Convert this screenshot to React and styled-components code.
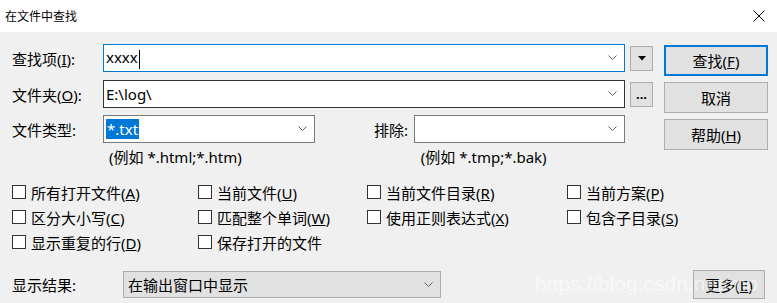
import styled, { createGlobalStyle } from "styled-components";

const GlobalStyle = createGlobalStyle`
  html, body {
    margin: 0;
    padding: 0;
    background: #f0f0f0;
  }
  body {
    font-family: "Noto Sans", "Noto Sans CJK SC", sans-serif;
    color: #000;
  }
`;

const Dialog = styled.div`
  position: relative;
  width: 777px;
  height: 303px;
  background: #f0f0f0;
  overflow: hidden;
`;

const TitleBar = styled.div`
  height: 32px;
  background: #fff;
  display: flex;
  align-items: center;
  justify-content: space-between;
  padding: 0 12px 0 5px;
  box-sizing: border-box;
  font-size: 12px;
`;

const Body = styled.div`
  padding: 12px 9px 0 12px;
  font-size: 15px;
`;

const Top = styled.div`
  display: flex;
  justify-content: space-between;
`;

const Form = styled.div`
  width: 641px;
  display: flex;
  flex-direction: column;
`;

const Row = styled.div`
  display: flex;
  align-items: center;
  height: 28px;
  margin-bottom: ${(p) => p.$mb ?? 8}px;
`;

const Label = styled.div`
  width: ${(p) => p.$w ?? 91}px;
  margin-left: ${(p) => p.$ml ?? 0}px;
  flex: none;
  white-space: nowrap;
`;

const Field = styled.div`
  width: ${(p) => p.$w}px;
  height: 28px;
  box-sizing: border-box;
  border: 1px solid ${(p) => p.$border};
  background: ${(p) => p.$bg ?? "#fff"};
  display: flex;
  align-items: center;
  padding: 0 7px 0 2px;
  flex: none;
`;

const FieldText = styled.span`
  flex: 1;
  white-space: nowrap;
  line-height: 20px;
`;

const Selected = styled.span`
  background: #0078d7;
  color: #fff;
  padding: 0 1px;
`;

const Cursor = styled.span`
  display: inline-block;
  width: 1px;
  height: 19px;
  background: #000;
  vertical-align: middle;
  margin-left: 1px;
`;

const SmallButton = styled.div`
  width: 23px;
  height: 25px;
  box-sizing: border-box;
  margin-left: 5px;
  border: 1px solid #adadad;
  background: #e1e1e1;
  display: flex;
  align-items: center;
  justify-content: center;
  flex: none;
  font-weight: bold;
  font-size: 13px;
  line-height: 1;
`;

const Hint = styled.div`
  display: flex;
  height: 20px;
`;

const HintText = styled.span`
  margin-left: ${(p) => p.$ml}px;
  white-space: nowrap;
`;

const Buttons = styled.div`
  width: 104px;
  display: flex;
  flex-direction: column;
  gap: 6px;
  padding-top: 1px;
`;

const Button = styled.div`
  height: ${(p) => p.$h ?? 31}px;
  box-sizing: border-box;
  border: ${(p) => (p.$primary ? "2px solid #0078d7" : "1px solid #adadad")};
  background: #e1e1e1;
  display: flex;
  align-items: center;
  justify-content: center;
  width: ${(p) => p.$w ?? 104}px;
  flex: none;
`;

const Checks = styled.div`
  display: grid;
  grid-template-columns: 186px 169px 200px auto;
  row-gap: 5px;
  margin-top: 16px;
`;

const Check = styled.label`
  display: flex;
  align-items: center;
  height: 20px;
  white-space: nowrap;
`;

const Box = styled.span`
  width: 14px;
  height: 14px;
  box-sizing: border-box;
  border: 1px solid #333;
  background: #fff;
  margin-right: 5px;
  flex: none;
`;

const Bottom = styled.div`
  display: flex;
  align-items: center;
  margin-top: 18px;
`;

const ResultCombo = styled(Field)`
  height: 27px;
  padding-left: 4px;
`;

const Watermark = styled.div`
  position: absolute;
  left: 535px;
  top: 272px;
  font-family: "Liberation Sans", sans-serif;
  font-size: 21px;
  color: rgba(255, 255, 255, 0.55);
  pointer-events: none;
  white-space: nowrap;
`;

function Chevron() {
  return (
    <svg width="9" height="6" viewBox="0 0 9 6">
      <polyline points="0.5,0.5 4.5,4.5 8.5,0.5" fill="none" stroke="#606060" strokeWidth="1" />
    </svg>
  );
}

function Combo({ w, border, bg, children }) {
  return (
    <Field $w={w} $border={border} $bg={bg}>
      <FieldText>{children}</FieldText>
      <Chevron />
    </Field>
  );
}

const checks = [
  ["所有打开文件", "A"],
  ["当前文件", "U"],
  ["当前文件目录", "R"],
  ["当前方案", "P"],
  ["区分大小写", "C"],
  ["匹配整个单词", "W"],
  ["使用正则表达式", "X"],
  ["包含子目录", "S"],
  ["显示重复的行", "D"],
  ["保存打开的文件", null],
];

export default function App() {
  return (
    <Dialog>
      <GlobalStyle />
      <TitleBar>
        <span>在文件中查找</span>
        <svg width="12" height="12" viewBox="0 0 12 12">
          <path d="M0.5 0.5 L11.5 11.5 M11.5 0.5 L0.5 11.5" stroke="#000" strokeWidth="1" />
        </svg>
      </TitleBar>
      <Body>
        <Top>
          <Form>
            <Row $mb={8}>
              <Label>查找项(<u>I</u>):</Label>
              <Combo w={522} border="#0078d7">
                xxxx<Cursor />
              </Combo>
              <SmallButton>
                <svg width="8" height="5" viewBox="0 0 8 5">
                  <polygon points="0,0 8,0 4,4.5" fill="#000" />
                </svg>
              </SmallButton>
            </Row>
            <Row $mb={7}>
              <Label>文件夹(<u>O</u>):</Label>
              <Combo w={522} border="#333">E:\log\</Combo>
              <SmallButton>...</SmallButton>
            </Row>
            <Row $mb={3}>
              <Label>文件类型:</Label>
              <Combo w={212} border="#7a7a7a">
                <Selected>*.txt</Selected>
              </Combo>
              <Label $w={40} $ml={59}>排除:</Label>
              <Combo w={211} border="#7a7a7a" />
            </Row>
            <Hint>
              <HintText $ml={97}>(例如 *.html;*.htm)</HintText>
              <HintText $ml={179}>(例如 *.tmp;*.bak)</HintText>
            </Hint>
          </Form>
          <Buttons>
            <Button $primary>查找(<u>F</u>)</Button>
            <Button>取消</Button>
            <Button>帮助(<u>H</u>)</Button>
          </Buttons>
        </Top>
        <Checks>
          {checks.map(([text, key]) => (
            <Check key={text}>
              <Box />
              <span>
                {text}
                {key && (
                  <>
                    (<u>{key}</u>)
                  </>
                )}
              </span>
            </Check>
          ))}
        </Checks>
        <Bottom>
          <Label $w={111}>显示结果:</Label>
          <ResultCombo $w={318} $border="#adadad" $bg="#e1e1e1">
            <FieldText>在输出窗口中显示</FieldText>
            <Chevron />
          </ResultCombo>
          <Button $w={72} $h={29} style={{ marginLeft: "auto", marginRight: 3 }}>
            更多(<u>E</u>)
          </Button>
        </Bottom>
      </Body>
      <Watermark>https://blog.csdn.net/mo</Watermark>
    </Dialog>
  );
}
